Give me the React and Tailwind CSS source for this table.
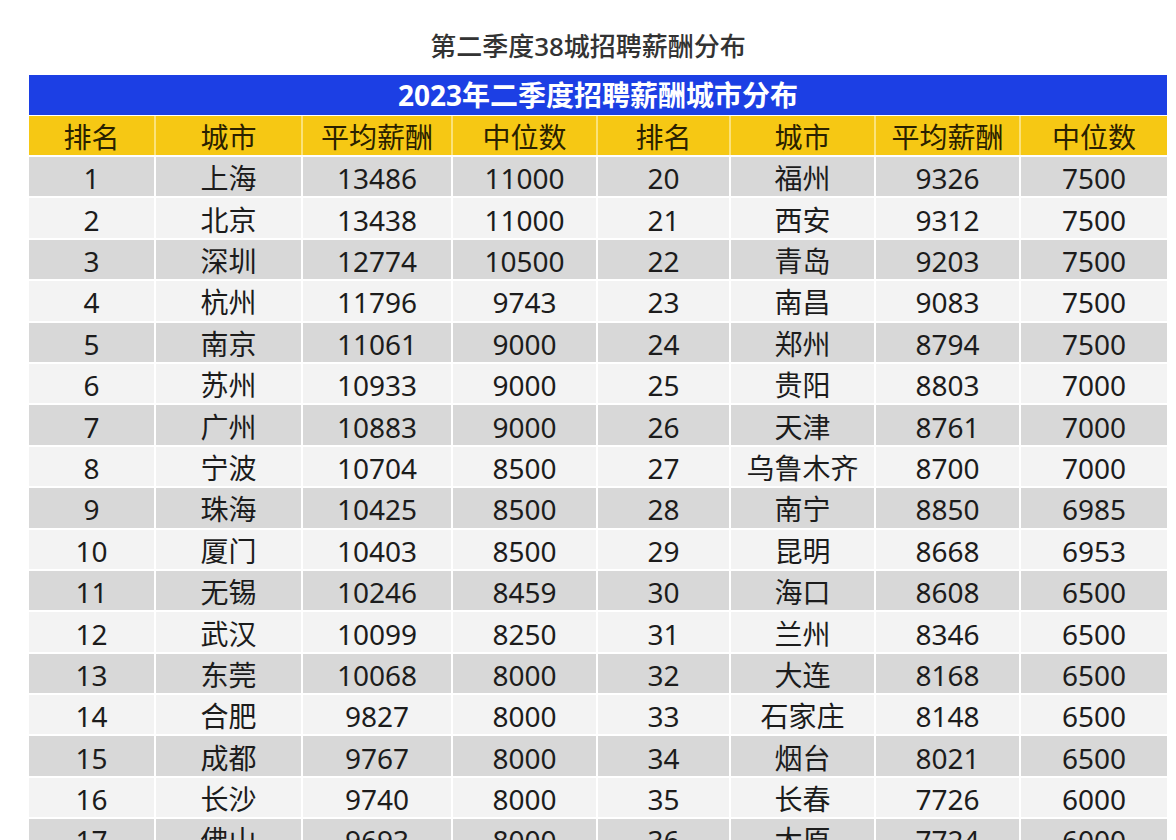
const left = [
  ["1", "上海", "13486", "11000"],
  ["2", "北京", "13438", "11000"],
  ["3", "深圳", "12774", "10500"],
  ["4", "杭州", "11796", "9743"],
  ["5", "南京", "11061", "9000"],
  ["6", "苏州", "10933", "9000"],
  ["7", "广州", "10883", "9000"],
  ["8", "宁波", "10704", "8500"],
  ["9", "珠海", "10425", "8500"],
  ["10", "厦门", "10403", "8500"],
  ["11", "无锡", "10246", "8459"],
  ["12", "武汉", "10099", "8250"],
  ["13", "东莞", "10068", "8000"],
  ["14", "合肥", "9827", "8000"],
  ["15", "成都", "9767", "8000"],
  ["16", "长沙", "9740", "8000"],
  ["17", "佛山", "9693", "8000"],
];

const right = [
  ["20", "福州", "9326", "7500"],
  ["21", "西安", "9312", "7500"],
  ["22", "青岛", "9203", "7500"],
  ["23", "南昌", "9083", "7500"],
  ["24", "郑州", "8794", "7500"],
  ["25", "贵阳", "8803", "7000"],
  ["26", "天津", "8761", "7000"],
  ["27", "乌鲁木齐", "8700", "7000"],
  ["28", "南宁", "8850", "6985"],
  ["29", "昆明", "8668", "6953"],
  ["30", "海口", "8608", "6500"],
  ["31", "兰州", "8346", "6500"],
  ["32", "大连", "8168", "6500"],
  ["33", "石家庄", "8148", "6500"],
  ["34", "烟台", "8021", "6500"],
  ["35", "长春", "7726", "6000"],
  ["36", "太原", "7724", "6000"],
];

const headers = ["排名", "城市", "平均薪酬", "中位数", "排名", "城市", "平均薪酬", "中位数"];

const cols =
  "grid grid-cols-[125px_145px_148px_143px_131px_143px_143px_146px] gap-x-[2px]";

export default function App() {
  return (
    <div
      className="h-[840px] w-[1176px] overflow-hidden bg-white"
      style={{ fontFamily: '"Noto Sans", "Noto Sans CJK SC", sans-serif' }}
    >
      {/* title */}
      <div className="h-[75px] pt-[30px] text-center text-[26px] leading-[32px] text-[#333] font-medium">
        第二季度38城招聘薪酬分布
      </div>

      <div className="ml-[29px] w-[1138px]">
        {/* blue banner */}
        <div className="flex h-[40px] items-center justify-center bg-[#1c3fe4] text-[28px] font-bold text-white">
          2023年二季度招聘薪酬城市分布
        </div>

        {/* yellow header */}
        <div className={`${cols} mt-[1px] bg-[#fbe27a]`}>
          {headers.map((h, i) => (
            <div
              key={i}
              className="flex h-[39px] items-center justify-center bg-[#f6c814] pt-[2px] text-[28px] text-[#2a2100]"
            >
              {h}
            </div>
          ))}
        </div>

        {/* rows */}
        <div className="mt-[2px] flex flex-col gap-y-[2px]">
          {left.map((row, r) => {
            const bg = r % 2 === 0 ? "bg-[#d8d8d8]" : "bg-[#f3f3f3]";
            const cells = [...row, ...right[r]];
            return (
              <div key={r} className={cols}>
                {cells.map((c, i) => (
                  <div
                    key={i}
                    className={`flex h-[39.4px] items-center justify-center pt-[3px] text-[28px] text-[#1c1c1c] ${bg}`}
                  >
                    {c}
                  </div>
                ))}
              </div>
            );
          })}
        </div>
      </div>
    </div>
  );
}
